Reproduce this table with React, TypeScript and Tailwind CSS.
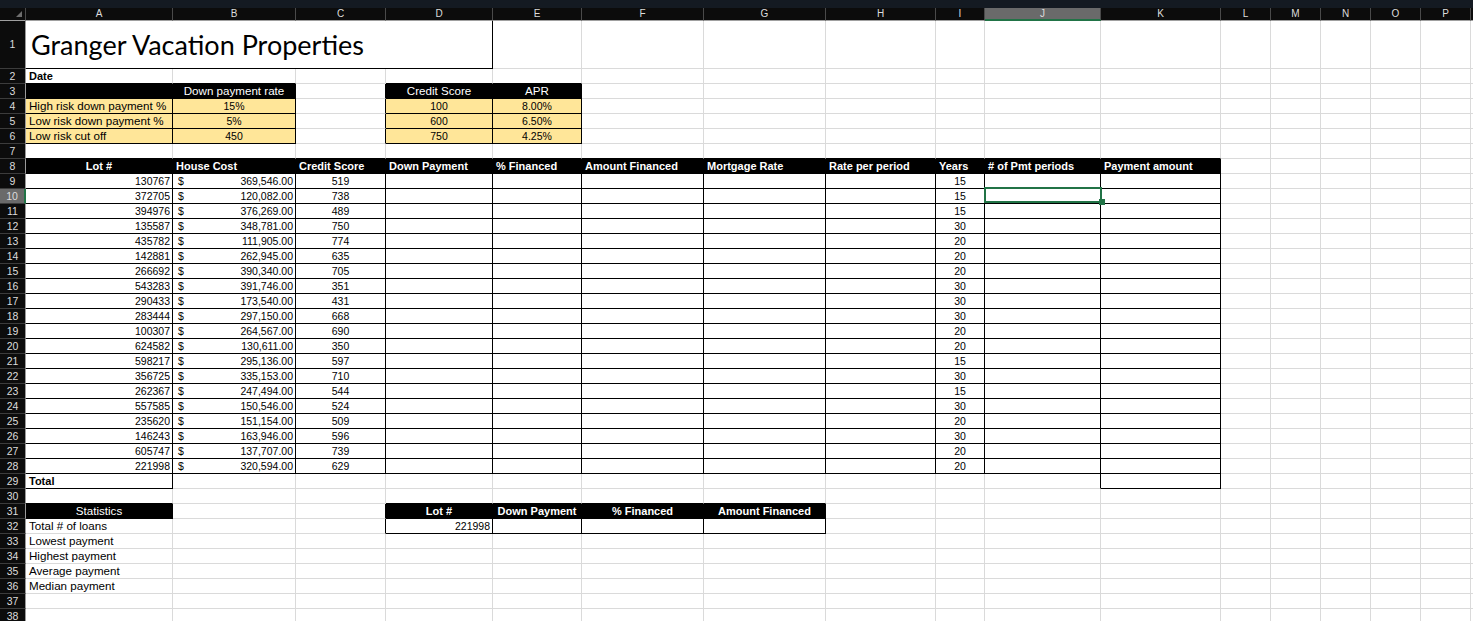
import React from "react";

const COLS = ["A", "B", "C", "D", "E", "F", "G", "H", "I", "J", "K", "L", "M", "N", "O", "P", "Q"];
const LAST_ROW = 38;
const SEL_ROW = 10;
const SEL_COL = 9;

type Spec = {
  t?: string;
  a?: "l" | "c" | "r" | "acct";
  b?: boolean;
  num?: boolean;
  fill?: "black" | "yellow";
  box?: boolean;
};

// lot #, house cost, credit score, years
const LOANS: [string, string, string, string][] = [
  ["130767", "369,546.00", "519", "15"],
  ["372705", "120,082.00", "738", "15"],
  ["394976", "376,269.00", "489", "15"],
  ["135587", "348,781.00", "750", "30"],
  ["435782", "111,905.00", "774", "20"],
  ["142881", "262,945.00", "635", "20"],
  ["266692", "390,340.00", "705", "20"],
  ["543283", "391,746.00", "351", "30"],
  ["290433", "173,540.00", "431", "30"],
  ["283444", "297,150.00", "668", "30"],
  ["100307", "264,567.00", "690", "20"],
  ["624582", "130,611.00", "350", "20"],
  ["598217", "295,136.00", "597", "15"],
  ["356725", "335,153.00", "710", "30"],
  ["262367", "247,494.00", "544", "15"],
  ["557585", "150,546.00", "524", "30"],
  ["235620", "151,154.00", "509", "20"],
  ["146243", "163,946.00", "596", "30"],
  ["605747", "137,707.00", "739", "20"],
  ["221998", "320,594.00", "629", "20"],
];

const HEADERS = [
  "Lot #", "House Cost", "Credit Score", "Down Payment", "% Financed", "Amount Financed",
  "Mortgage Rate", "Rate per period", "Years", "# of Pmt periods", "Payment amount",
];

const cells: Record<string, Spec> = {};
const set = (r: number, c: number, s: Spec) => {
  cells[`${r}-${c}`] = s;
};

set(2, 0, { t: "Date", b: true });
set(3, 0, { fill: "black" });
set(3, 1, { t: "Down payment rate", a: "c", fill: "black" });
set(3, 3, { t: "Credit Score", a: "c", fill: "black" });
set(3, 4, { t: "APR", a: "c", fill: "black" });
[
  ["High risk down payment %", "15%", "100", "8.00%"],
  ["Low risk down payment %", "5%", "600", "6.50%"],
  ["Low risk cut off", "450", "750", "4.25%"],
].forEach(([label, rate, score, apr], i) => {
  set(4 + i, 0, { t: label, fill: "yellow", box: true });
  set(4 + i, 1, { t: rate, a: "c", num: true, fill: "yellow", box: true });
  set(4 + i, 3, { t: score, a: "c", num: true, fill: "yellow", box: true });
  set(4 + i, 4, { t: apr, a: "c", num: true, fill: "yellow", box: true });
});

HEADERS.forEach((h, c) => set(8, c, { t: h, b: true, a: c === 0 ? "c" : "l", fill: "black" }));
LOANS.forEach(([lot, cost, score, years], i) => {
  const r = 9 + i;
  for (let c = 0; c <= 10; c++) set(r, c, { box: true });
  set(r, 0, { t: lot, a: "r", num: true, box: true });
  set(r, 1, { t: cost, a: "acct", num: true, box: true });
  set(r, 2, { t: score, a: "c", num: true, box: true });
  set(r, 8, { t: years, a: "c", num: true, box: true });
});
set(29, 0, { t: "Total", b: true, box: true });
set(29, 10, { box: true });

set(31, 0, { t: "Statistics", a: "c", fill: "black" });
["Lot #", "Down Payment", "% Financed", "Amount Financed"].forEach((h, i) =>
  set(31, 3 + i, { t: h, b: true, a: "c", fill: "black" })
);
set(32, 3, { t: "221998", a: "r", num: true, box: true });
for (let c = 4; c <= 6; c++) set(32, c, { box: true });
["Total # of loans", "Lowest payment", "Highest payment", "Average payment", "Median payment"].forEach(
  (t, i) => set(32 + i, 0, { t })
);

const edged = (r: number, c: number) => {
  const s = cells[`${r}-${c}`];
  return !!s && (!!s.box || s.fill === "black");
};

function GridCell({ r, c }: { r: number; c: number }) {
  const s = cells[`${r}-${c}`] ?? {};
  const right = edged(r, c) || edged(r, c + 1) ? "border-r-black" : "border-r-[#dadada]";
  const bottom = edged(r, c) || edged(r + 1, c) ? "border-b-black" : "border-b-[#dadada]";
  const bg = s.fill === "black" ? "bg-black text-white" : s.fill === "yellow" ? "bg-[#ffe699]" : "bg-white";
  const justify = s.a === "c" ? "justify-center" : s.a === "r" ? "justify-end" : "justify-start";
  const size = s.num ? "text-[10.5px]" : s.b ? "text-[11px] font-bold" : "text-[11.6px]";
  const selected = r === SEL_ROW && c === SEL_COL;

  return (
    <div
      className={`relative flex items-center whitespace-nowrap border-r border-b ${right} ${bottom} ${bg} ${justify} ${size} leading-[14px]`}
    >
      {s.a === "acct" ? (
        <span className="flex w-full justify-between pl-[5px] pr-[2px]">
          <span>$</span>
          <span>{s.t}</span>
        </span>
      ) : s.t ? (
        <span className={s.a === "r" ? "pr-[2px]" : s.a === "c" ? "" : "pl-[3px]"}>{s.t}</span>
      ) : null}
      {selected ? (
        <div className="absolute top-[-2px] left-[-1px] right-[-2px] bottom-0 z-10 border-2 border-[#217346]">
          <div className="absolute right-[-5px] bottom-[-4px] h-[6px] w-[6px] bg-[#217346]" />
        </div>
      ) : null}
    </div>
  );
}

function RowHeader({ r }: { r: number }) {
  const sel = r === SEL_ROW;
  return (
    <div
      className={`flex items-center justify-center border-b border-b-[#3c3c3c] text-[10.5px] leading-none text-[#dcdcdc] ${
        sel ? "border-r-2 border-r-[#217346] bg-[#6a6a6a]" : "border-r border-r-[#9a9a9a] bg-[#0c0c0c]"
      }`}
    >
      {r}
    </div>
  );
}

export default function App() {
  const rows = Array.from({ length: LAST_ROW - 1 }, (_, i) => i + 2);

  return (
    <div className="h-[621px] w-[1473px] overflow-hidden bg-white font-['Liberation_Sans',Arial,sans-serif] text-black">
      <div className="h-[8px] bg-[#141a22]" />
      <div className="grid grid-cols-[26px_147px_123px_90px_107px_89px_122px_122px_110px_49px_116px_120px_50px_50px_50px_50px_50px_50px] grid-rows-[13px_48px_repeat(37,15px)]">
        {/* column letters */}
        <div className="relative border-r border-b border-r-[#4a4a4a] border-b-[#a0a0a0] bg-[#0c0c0c]">
          <svg className="absolute right-[3px] bottom-[3px]" width="6" height="6" viewBox="0 0 6 6">
            <path d="M6 0 L6 6 L0 6 Z" fill="#6e6e6e" />
          </svg>
        </div>
        {COLS.map((col, c) => (
          <div
            key={col}
            className={`flex items-center justify-center border-r border-r-[#4a4a4a] text-[10px] leading-none text-[#dcdcdc] ${
              c === SEL_COL ? "border-b-2 border-b-[#217346] bg-[#6a6a6a]" : "border-b border-b-[#a0a0a0] bg-[#0c0c0c]"
            }`}
          >
            {/* column Q is only a sliver at the window edge */}
            {col === "Q" ? null : col}
          </div>
        ))}

        {/* row 1: merged title A1:D1 */}
        <RowHeader r={1} />
        <div className="col-span-4 flex items-center border-r border-b border-black bg-white pl-[5px]">
          <span className="font-['Lato',sans-serif] text-[27px] leading-none">Granger Vacation Properties</span>
        </div>
        {COLS.slice(4).map((col) => (
          <div key={col} className="border-r border-b border-[#dadada] bg-white" />
        ))}

        {rows.map((r) => (
          <React.Fragment key={r}>
            <RowHeader r={r} />
            {COLS.map((col, c) => (
              <GridCell key={col} r={r} c={c} />
            ))}
          </React.Fragment>
        ))}
      </div>
    </div>
  );
}
